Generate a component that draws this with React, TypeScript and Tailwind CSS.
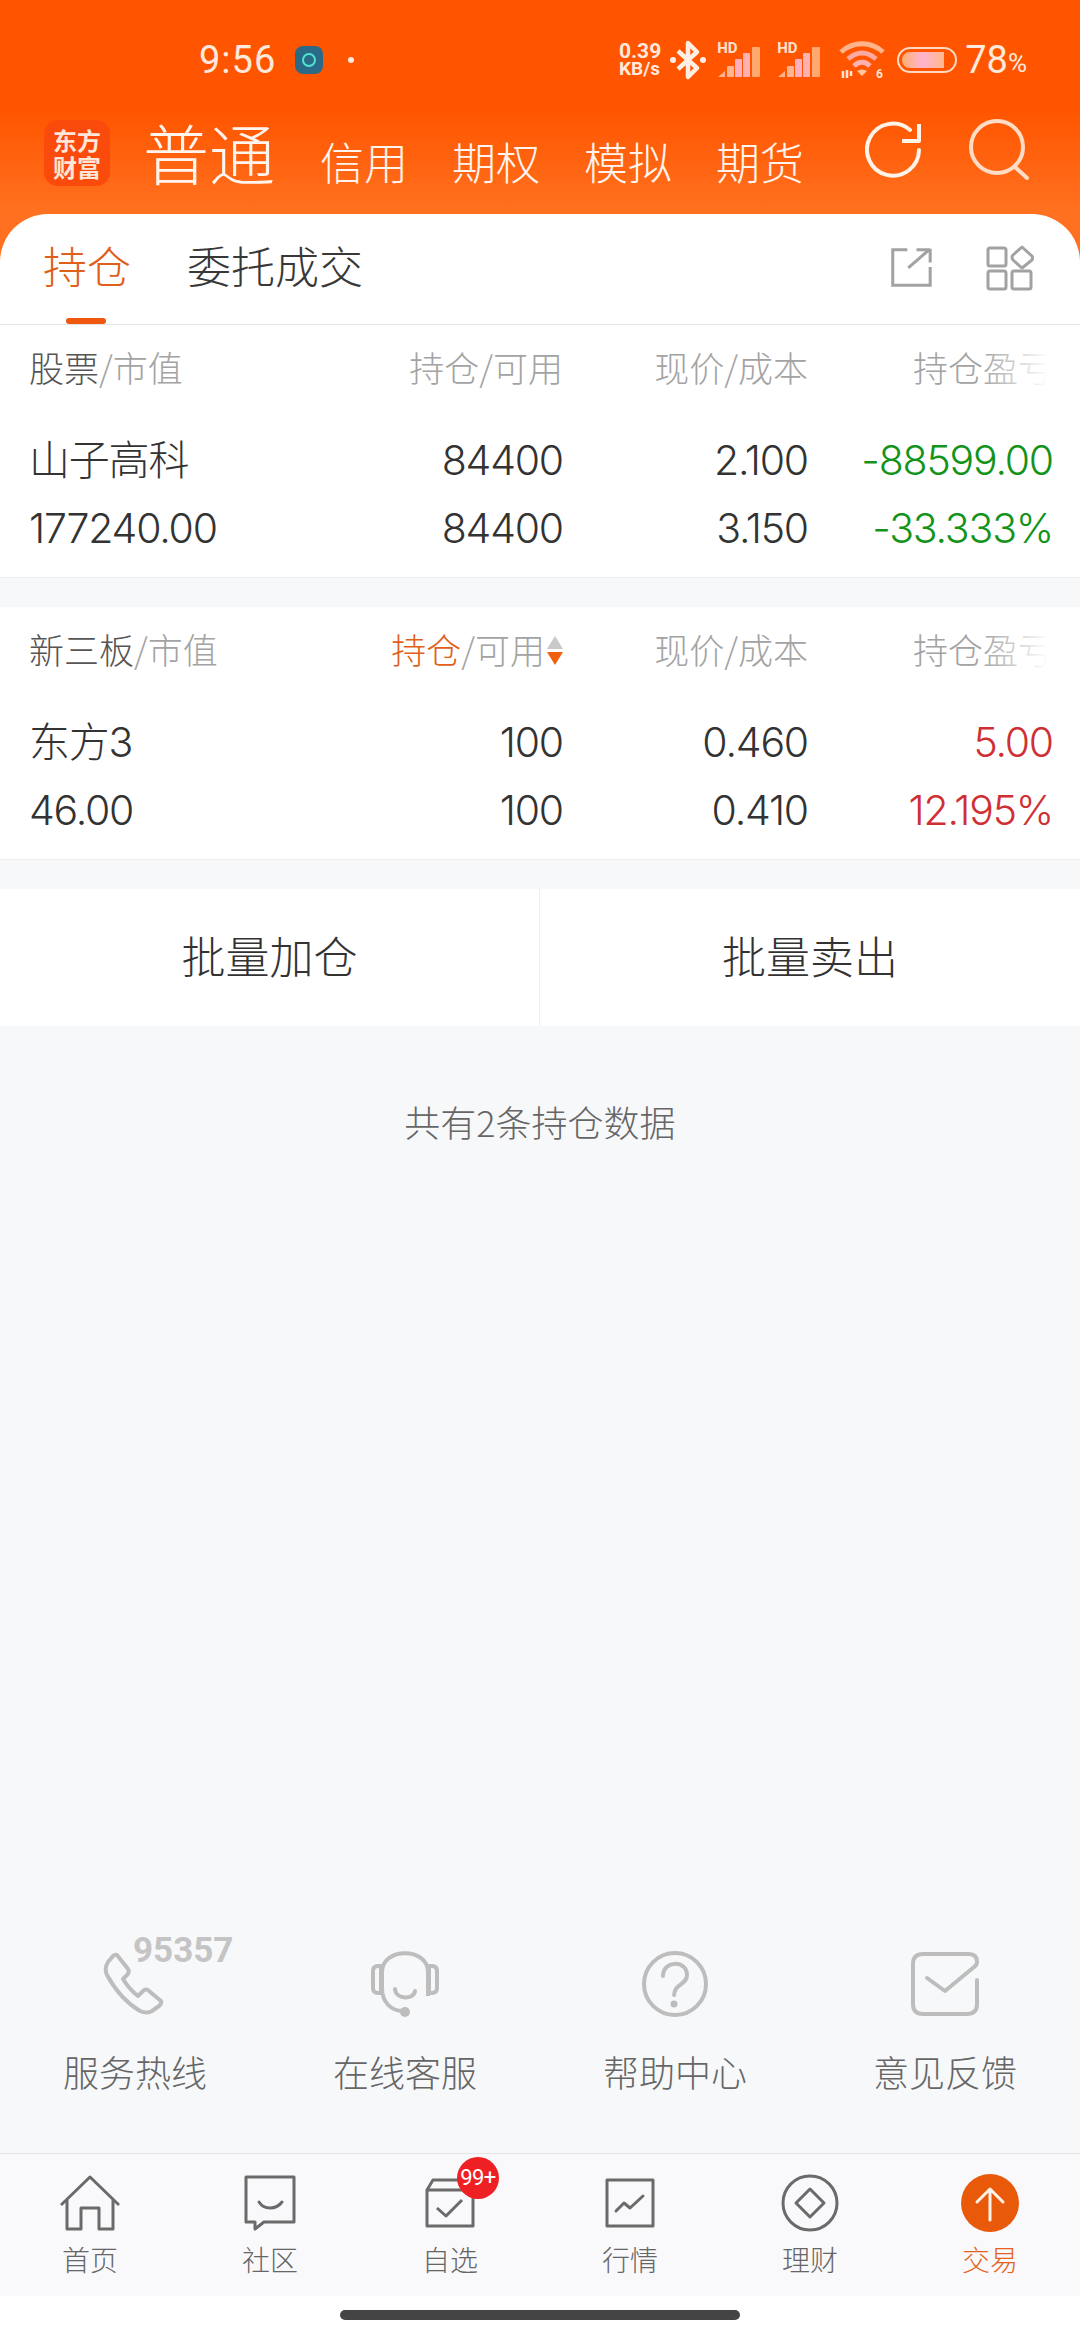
import React from "react";

const CJK = { fontFamily: '"Noto Sans CJK SC","Noto Sans",sans-serif' };
const NUM = { fontFamily: 'Inter,"Noto Sans CJK SC",sans-serif' };

function Signal() {
  return (
    <div className="relative w-[44px] h-[36px]">
      <span className="absolute left-0 top-[-1px] text-[15px] leading-[15px] font-bold text-[#ffe3cf] font-['Roboto']">HD</span>
      <svg width="44" height="32" viewBox="0 0 44 32" className="absolute left-0 top-[4px]">
        <path d="M1 31 L8 25 V31Z" fill="#ffb38a" />
        <rect x="10" y="20" width="7" height="11" rx="1" fill="#ffb690" />
        <rect x="18" y="13" width="7" height="18" rx="1" fill="#ffb0c0" />
        <rect x="26" y="7" width="7" height="24" rx="1" fill="#ffb0b0" />
        <rect x="35" y="1" width="8" height="30" rx="1" fill="#ffa870" />
      </svg>
    </div>
  );
}

function StatusBar() {
  return (
    <div className="h-[118px] relative flex items-center pt-[2px] text-[#ffe9dc]">
      <span className="ml-[199px] w-[90px] text-[38px] leading-none font-['Roboto'] font-normal tracking-[1px]">9:56</span>
      <div className="ml-[6px] w-[28px] h-[28px] rounded-[8px] bg-[#2a6a86] flex items-center justify-center">
        <div className="w-[14px] h-[14px] rounded-full border-2 border-[#4ee3d0]" />
      </div>
      <div className="ml-[25px] w-[6px] h-[6px] rounded-full bg-[#ffe9dc]" />
      <div className="ml-auto flex items-center mr-[53px]">
        <div className="flex flex-col items-start font-['Roboto'] font-bold text-[#ffe9dc] mr-[9px]">
          <span className="text-[21px] leading-[18px]">0.39</span>
          <span className="text-[19px] leading-[18px]">KB/s</span>
        </div>
        <svg width="36" height="42" viewBox="0 0 36 42" fill="none" className="mr-[11px]">
          <path d="M8 12 L27 29 L18 38 V4 L27 13 L8 30" stroke="#ffeee4" strokeWidth="4.5" strokeLinejoin="round" />
          <circle cx="3" cy="21" r="3" fill="#ffeee4" />
          <circle cx="33" cy="21" r="3" fill="#ffeee4" />
        </svg>
        <Signal />
        <div className="w-[16px]" />
        <Signal />
        <svg width="46" height="38" viewBox="0 0 46 38" fill="none" className="ml-[18px] mr-[12px]">
          <path d="M2 11 C14 0 32 0 44 11" stroke="#ffb48c" strokeWidth="5" />
          <path d="M9 18 C18 10 28 10 37 18" stroke="#ffa8a0" strokeWidth="5" />
          <path d="M15 25 C20 20 26 20 31 25" stroke="#ffb0b0" strokeWidth="5" />
          <path d="M18 30 Q23 27 28 30 L23 35Z" fill="#ffc89a" />
          <path d="M4 30 V37 M8 37 V29 M12 30 V35" stroke="#ffe3d0" strokeWidth="2.5" />
          <text x="37" y="37" fontSize="12" fontWeight="700" fill="#ffe3d0" fontFamily="Roboto">6</text>
        </svg>
        <div className="w-[60px] h-[26px] rounded-full border-2 border-[#ffd9c2] p-[3px] mr-[8px] flex">
          <div className="h-full w-[42px] rounded-l-full rounded-r-[3px] bg-[linear-gradient(90deg,#ffb072,#ffb3d0,#ffb88a)]" />
        </div>
        <span className="text-[38px] leading-none font-['Roboto'] font-normal">78</span>
        <span className="text-[26px] leading-none font-['Roboto'] mt-[6px]">%</span>
      </div>
    </div>
  );
}

function TopNav() {
  return (
    <div className="h-[96px] flex items-start text-[#fff5ee] font-light" style={CJK}>
      <div className="ml-[44px] mt-[2px] w-[66px] h-[66px] rounded-[14px] bg-[#fa4a0c] flex flex-col items-center justify-center text-[#ffe6d6] font-bold text-[24px] leading-[27px]">
        <span>东方</span>
        <span>财富</span>
      </div>
      <span className="ml-[33px] text-[66px] leading-[72px] mt-[-3px] w-[132px] whitespace-nowrap">普通</span>
      <span className="ml-[45px] text-[44px] leading-[50px] mt-[18px] whitespace-nowrap">信用</span>
      <span className="ml-[44px] text-[44px] leading-[50px] mt-[18px] whitespace-nowrap">期权</span>
      <span className="ml-[44px] text-[44px] leading-[50px] mt-[18px] whitespace-nowrap">模拟</span>
      <span className="ml-[44px] text-[44px] leading-[50px] mt-[18px] whitespace-nowrap">期货</span>
      <svg width="60" height="62" viewBox="0 0 60 62" fill="none" className="ml-[61px] mt-[3px] shrink-0">
        <path d="M54 29 A26 26 0 1 1 45 9" stroke="#fff3ea" strokeWidth="4" strokeLinecap="round" />
        <path d="M54 3 V20 H37" stroke="#fff3ea" strokeWidth="4" strokeLinejoin="round" />
      </svg>
      <svg width="62" height="62" viewBox="0 0 62 62" fill="none" className="ml-[44px] shrink-0">
        <circle cx="28" cy="29" r="26" stroke="#ffdcc6" strokeWidth="4" />
        <path d="M46 49 L58 60" stroke="#ffdcc6" strokeWidth="4" strokeLinecap="round" />
      </svg>
    </div>
  );
}

function Tabs() {
  return (
    <div className="h-[111px] bg-white rounded-t-[48px] border-b border-[#e6e6e6] relative flex items-start" style={CJK}>
      <div className="ml-[43px] mt-[25px] text-[44px] leading-[52px] text-[#e0601a] font-light">持仓</div>
      <div className="ml-[56px] mt-[25px] text-[44px] leading-[52px] text-[#383838] font-light">委托成交</div>
      <div className="absolute left-[66px] bottom-0 w-[40px] h-[6px] rounded-full bg-[#f0570f]" />
      <svg width="42" height="42" viewBox="0 0 46 46" fill="none" className="ml-auto mt-[32px]" stroke="#a2a2a2" strokeWidth="3.3">
        <path d="M19 4 H3 V43 H44 V23" />
        <path d="M44 4 H29 M44 3 V18 M43 4 L20 24" />
      </svg>
      <svg width="48" height="46" viewBox="0 0 48 46" fill="none" className="ml-[54px] mr-[46px] mt-[31px]" stroke="#a2a2a2" strokeWidth="3">
        <rect x="2" y="3" width="18" height="18" rx="2" />
        <rect x="2" y="26" width="18" height="18" rx="2" />
        <rect x="26" y="26" width="19" height="18" rx="2" />
        <path d="M36 2 L46 11 Q47 13 46 15 L36 23 L27 15 Q25 12 27 10Z" strokeLinejoin="round" />
      </svg>
    </div>
  );
}

function SortArrows() {
  return (
    <span className="inline-flex flex-col gap-[3px] ml-[2px] mt-[3px]">
      <span className="w-0 h-0 border-l-[8px] border-r-[8px] border-b-[13px] border-l-transparent border-r-transparent border-b-[#c9c9c9]" />
      <span className="w-0 h-0 border-l-[8px] border-r-[8px] border-t-[13px] border-l-transparent border-r-transparent border-t-[#f0600f]" />
    </span>
  );
}

const COLS = "grid grid-cols-[270px_264px_245px_245px] pl-[29px] pr-[27px]";

function Holding({ first, firstSub, posHl, rows, color }: { first: string; firstSub: string; posHl?: boolean; rows: string[][]; color: string }) {
  return (
    <section className="bg-white border-b border-[#eeeeee] h-[253px]" style={CJK}>
      <div className={"relative h-[102px] pt-[19px] text-[35px] leading-[46px] font-light text-[#a3a3a3] " + COLS}>
        <div className="whitespace-nowrap"><span className="text-[#555555]">{first}</span>{firstSub}</div>
        <div className="flex justify-end items-center h-[46px] whitespace-nowrap">
          <span className={posHl ? "text-[#e0601a]" : ""}>持仓</span>/可用{posHl ? <SortArrows /> : null}
        </div>
        <div className="text-right whitespace-nowrap">现价/成本</div>
        <div className="text-right whitespace-nowrap">持仓盈亏</div>
        <div className="absolute right-[20px] top-[16px] w-[78px] h-[50px] bg-[linear-gradient(90deg,rgba(255,255,255,0),#fff_85%)]" />
      </div>
      {rows.map((r, i) => (
        <div key={i} className={"h-[68px] items-center text-[41px] tracking-[-1.2px] font-light text-[#333333] " + COLS} style={NUM}>
          <div className="whitespace-nowrap">{r[0]}</div>
          <div className="text-right">{r[1]}</div>
          <div className="text-right">{r[2]}</div>
          <div className={"text-right whitespace-nowrap " + color}>{r[3]}</div>
        </div>
      ))}
    </section>
  );
}

const serviceStroke = "#bdbdbd";

function PhoneIcon() {
  return (
    <div className="relative w-[66px] h-[66px]">
      <svg width="66" height="66" viewBox="0 0 66 66" fill="none" stroke={serviceStroke} strokeWidth="4" strokeLinejoin="round">
        <path d="M15 4 L26 18 Q28 21 25 24 L21 28 Q27 38 36 45 L41 40 Q44 37 47 40 L59 50 Q60 53 57 55 L50 60 Q45 63 38 60 Q18 48 5 24 Q2 17 6 11 L11 5 Q13 3 15 4Z" />
      </svg>
      <span className="absolute left-[31px] top-[-18px] text-[35px] leading-[36px] font-bold text-[#c4c4c4] font-['Roboto']">95357</span>
    </div>
  );
}

function HeadsetIcon() {
  return (
    <svg width="68" height="68" viewBox="0 0 68 68" fill="none" stroke={serviceStroke} strokeWidth="4">
      <path d="M11 38 V22 C11 -3 57 -3 57 22 V46" />
      <path d="M10 16 H7 Q2 16 2 21 V38 Q2 43 7 43 H10Z" />
      <path d="M58 16 H61 Q66 16 66 21 V38 Q66 43 61 43 H58Z" />
      <path d="M24 39 C25 50 43 50 44 41" strokeLinecap="round" />
      <path d="M11 38 C11 52 20 61 32 61" />
      <circle cx="34" cy="62" r="5" fill={serviceStroke} stroke="none" />
    </svg>
  );
}

function HelpIcon() {
  return (
    <svg width="68" height="68" viewBox="0 0 68 68" fill="none" stroke={serviceStroke} strokeWidth="4">
      <circle cx="34" cy="34" r="31" />
      <path d="M22 26 C22 10 46 10 46 25 C46 35 34 33 33 45" strokeLinecap="round" />
      <circle cx="33" cy="54" r="3.5" fill={serviceStroke} stroke="none" />
    </svg>
  );
}

function MailIcon() {
  return (
    <svg width="68" height="64" viewBox="0 0 68 64" fill="none" stroke={serviceStroke} strokeWidth="4" strokeLinecap="round">
      <path d="M66 28 V52 Q66 62 56 62 H12 Q2 62 2 52 V12 Q2 2 12 2 H58 Q66 2 66 10 Q66 13 63 15 L34 39 L16 26" strokeLinejoin="round" />
    </svg>
  );
}

function Service({ icon, label }: { icon: React.ReactNode; label: string }) {
  return (
    <div className="flex flex-col items-center">
      <div className="h-[70px] flex items-center justify-center">{icon}</div>
      <div className="mt-[29px] text-[36px] leading-[46px] text-[#666666] font-light whitespace-nowrap" style={CJK}>{label}</div>
    </div>
  );
}

const navStroke = "#6a6a6a";

function NavItem({ icon, label, active }: { icon: React.ReactNode; label: string; active?: boolean }) {
  return (
    <div className="relative flex flex-col items-center">
      <div className="h-[60px] flex items-center justify-center">{icon}</div>
      <div className={"mt-[8px] text-[28px] leading-[36px] font-light " + (active ? "text-[#e5631c]" : "text-[#666666]")} style={CJK}>{label}</div>
    </div>
  );
}

function BottomNav() {
  return (
    <div className="h-[143px] border-t border-[#e4e4e6] bg-[#f9f9fb] grid grid-cols-6 pt-[19px]">
      <NavItem label="首页" icon={
        <svg width="60" height="56" viewBox="0 0 60 56" fill="none" stroke={navStroke} strokeWidth="3">
          <path d="M1 30 L30 2 L59 30" strokeLinejoin="round" />
          <path d="M7 25 V54 H21 V33 H39 V54 H53 V25" strokeLinejoin="round" />
        </svg>} />
      <NavItem label="社区" icon={
        <svg width="52" height="56" viewBox="0 0 52 56" fill="none" stroke={navStroke} strokeWidth="3" strokeLinejoin="round">
          <path d="M2 2 H50 V47 H20 L11 54 V47 H2Z" />
          <path d="M15 27 C20 35 32 35 38 27" strokeLinecap="round" />
        </svg>} />
      <div className="relative flex flex-col items-center">
        <div className="h-[60px] flex items-center justify-center">
          <svg width="50" height="50" viewBox="0 0 50 50" fill="none" stroke={navStroke} strokeWidth="3" strokeLinejoin="round">
            <path d="M2 12 L8 2 H42 L48 12 V48 H2Z" />
            <path d="M2 12 H48" />
            <path d="M12 30 L21 38 L37 22" />
          </svg>
        </div>
        <div className="mt-[8px] text-[28px] leading-[36px] font-light text-[#666666]" style={CJK}>自选</div>
        <div className="absolute left-[97px] top-[-16px] w-[42px] h-[42px] rounded-full bg-[#ee2024] flex items-center justify-center text-white text-[22px] leading-none font-['Roboto'] tracking-[-0.5px]">99+</div>
      </div>
      <NavItem label="行情" icon={
        <svg width="50" height="50" viewBox="0 0 50 50" fill="none" stroke={navStroke} strokeWidth="3" strokeLinejoin="round">
          <rect x="2" y="2" width="46" height="46" />
          <path d="M11 33 L19 25 L25 30 L38 18" strokeLinecap="round" />
        </svg>} />
      <NavItem label="理财" icon={
        <svg width="58" height="58" viewBox="0 0 58 58" fill="none" stroke={navStroke} strokeWidth="3" strokeLinejoin="round">
          <circle cx="29" cy="29" r="27" />
          <path d="M29 15 L43 29 L29 43 L15 29Z" />
        </svg>} />
      <NavItem label="交易" active icon={
        <svg width="58" height="58" viewBox="0 0 58 58" fill="none">
          <circle cx="29" cy="29" r="29" fill="#e9590a" />
          <path d="M29 46 V15 M16 28 L29 15 L42 28" stroke="#fff2e8" strokeWidth="3" strokeLinecap="round" strokeLinejoin="round" />
        </svg>} />
    </div>
  );
}

export default function App() {
  return (
    <div className="w-[1080px] h-[2340px] flex flex-col bg-[#f7f8fa] overflow-hidden">
      <div className="bg-[linear-gradient(180deg,#ff5500_0,#ff5500_110px,#ff7120_214px,#ff7120_325px)] shrink-0">
        <StatusBar />
        <TopNav />
        <Tabs />
      </div>
      <Holding first="股票" firstSub="/市值" color="text-[#14931a]" rows={[["山子高科", "84400", "2.100", "-88599.00"], ["177240.00", "84400", "3.150", "-33.333%"]]} />
      <div className="h-[29px]" />
      <Holding first="新三板" firstSub="/市值" posHl color="text-[#cf3034]" rows={[["东方3", "100", "0.460", "5.00"], ["46.00", "100", "0.410", "12.195%"]]} />
      <div className="h-[29px]" />
      <div className="h-[137px] bg-white grid grid-cols-2 text-[44px] font-light text-[#333333]" style={CJK}>
        <div className="flex items-center justify-center pb-[5px] border-r border-[#eeeeee]">批量加仓</div>
        <div className="flex items-center justify-center pb-[5px]">批量卖出</div>
      </div>
      <div className="mt-[70px] text-center text-[36px] leading-[50px] font-light text-[#666666]" style={CJK}>共有2条持仓数据</div>
      <div className="mt-auto grid grid-cols-4 mb-[59px] w-[1080px] [&>*]:justify-self-center">
        <Service icon={<PhoneIcon />} label="服务热线" />
        <Service icon={<HeadsetIcon />} label="在线客服" />
        <Service icon={<HelpIcon />} label="帮助中心" />
        <Service icon={<MailIcon />} label="意见反馈" />
      </div>
      <BottomNav />
      <div className="h-[44px] bg-white flex justify-center pt-[14px] shrink-0">
        <div className="w-[400px] h-[10px] rounded-full bg-[#444444]" />
      </div>
    </div>
  );
}
